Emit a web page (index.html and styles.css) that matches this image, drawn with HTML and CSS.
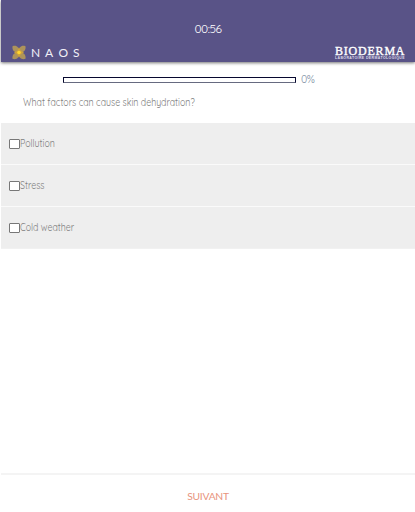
FILE: index.html
```html
<!DOCTYPE html>
<html lang="en">
<head>
<meta charset="utf-8">
<title>Quiz</title>
<link rel="stylesheet" href="styles.css">
</head>
<body>
<div class="app">
  <header class="header">
    <div class="timer">00:56</div>
    <div class="brands">
      <svg class="naos" width="72" height="16" viewBox="0 0 72 16" role="img" aria-label="NAOS">
        <g fill="#ad935b">
          <path d="M7 7.500C2 8 0 5 .5 1.200C4.500 0 7.500 2 7 7.500Z"/>
          <path d="M7 7.500C12 8 14 5 13.500 1.200C9.500 0 6.500 2 7 7.500Z"/>
          <path d="M7 7.500C2 7 0 10 .5 13.800C4.500 15 7.500 13 7 7.500Z"/>
          <path d="M7 7.500C12 7 14 10 13.500 13.800C9.500 15 6.500 13 7 7.500Z"/>
        </g>
        <path fill="#cda13b" d="M7 2.200L8.800 5.700L12 7.500L8.800 9.300L7 12.800L5.200 9.300L2 7.500L5.200 5.700Z"/>
        <circle cx="7" cy="7.500" r="1.800" fill="#ffd52e"/>
        <text class="naos-text" y="12" x="19 33 46.500 61">NAOS</text>
      </svg>
      <svg class="bioderma" width="71" height="16" viewBox="0 0 71 16" role="img" aria-label="Bioderma">
        <text class="bio-text" x="1" y="9.500" textLength="69.500">BIODERMA</text>
        <text class="bio-sub" x="1" y="14" textLength="69.500">LABORATOIRE DERMATOLOGIQUE</text>
      </svg>
    </div>
  </header>
  <main class="main">
    <div class="progress">
      <div class="bar"></div>
      <span class="percent">0%</span>
    </div>
    <h1 class="question">What factors can cause skin dehydration?</h1>
    <div class="answers">
      <label class="answer"><span class="box"></span><span class="label">Pollution</span></label>
      <label class="answer"><span class="box"></span><span class="label">Stress</span></label>
      <label class="answer"><span class="box"></span><span class="label">Cold weather</span></label>
    </div>
  </main>
  <footer class="footer">SUIVANT</footer>
</div>
</body>
</html>
```
FILE: styles.css
```css
* { box-sizing: border-box; }
body {
  margin: 0;
  background: #fff;
  font-family: Quicksand, Lato, sans-serif;
  font-size: 10px;
}
.app {
  display: flex;
  flex-direction: column;
  height: 512px;
  padding-left: 1px;
}
.header {
  flex: none;
  height: 62px;
  background: #595387;
  box-shadow: 0 1px 3px rgba(0, 0, 0, .55);
  color: #fff;
  padding: 22px 10px 0 11px;
}
.timer {
  height: 14px;
  line-height: 14px;
  font-size: 12px;
  letter-spacing: -.5px;
  text-align: center;
  padding-right: 1px;
}
.brands {
  display: flex;
  justify-content: space-between;
  margin-top: 9px;
}
.brands svg { display: block; overflow: visible; }
.naos-text { font: 12px Lato, sans-serif; fill: #f1eff7; }
.bio-text { font: 12px "Liberation Serif", serif; fill: #fff; stroke: #fff; stroke-width: .35px; }
.bio-sub { font: bold 3.5px "Liberation Sans", sans-serif; fill: #dddbea; }
.main { flex: 1; }
.progress {
  display: flex;
  align-items: center;
  height: 14px;
  margin: 10px 0 0 62px;
}
.bar {
  width: 233px;
  height: 6px;
  margin-top: 1px;
  border: 1px solid #07082f;
  border-bottom-color: #666a80;
}
.percent {
  margin-left: 5px;
  font-size: 10.5px;
  line-height: 14px;
  letter-spacing: -.4px;
  color: #8191a5;
}
.question {
  margin: 10px 0 0 22px;
  font-size: 10.3px;
  font-weight: 400;
  line-height: 14px;
  color: #808080;
  white-space: nowrap;
  transform: scaleX(.858);
  transform-origin: left;
}
.answers {
  display: flex;
  flex-direction: column;
  gap: 1px;
  margin-top: 13px;
  border-bottom: 1px solid #f1f1f1;
  background: #fafafa;
}
.answer {
  display: flex;
  align-items: center;
  height: 41px;
  padding-left: 8px;
  background: #eee;
  color: #808080;
  font-size: 10.3px;
  line-height: 14px;
}
.label {
  transform: scaleX(.858);
  transform-origin: left;
}
.box {
  width: 11px;
  height: 10px;
  margin-right: -.5px;
  border: 1px solid #777;
  border-radius: 1px;
  background: #fff;
}
.footer {
  flex: none;
  height: 39px;
  border-top: 2px solid #f4f4f4;
  padding-top: 13px;
  font-family: Lato, sans-serif;
  font-size: 10.3px;
  line-height: 16px;
  letter-spacing: -.25px;
  text-align: center;
  color: #e8947d;
}
```
